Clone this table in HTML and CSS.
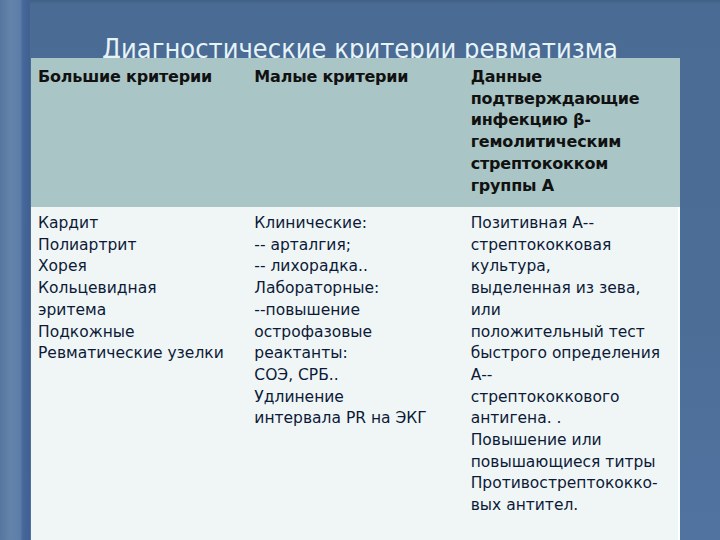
FILE: index.html
```html
<!DOCTYPE html>
<html lang="ru">
<head>
<meta charset="utf-8">
<title>Диагностические критерии ревматизма</title>
<link rel="stylesheet" href="styles.css">
</head>
<body>
<div class="slide">
  <div class="edge"></div>
  <div class="main">
    <h1 class="title">Диагностические критерии ревматизма</h1>
    <div class="table">
      <div class="cell head">Большие критерии</div>
      <div class="cell head">Малые критерии</div>
      <div class="cell head">Данные<br>подтверждающие<br>инфекцию β-<br>гемолитическим<br>стрептококком<br>группы А</div>
      <div class="cell body">Кардит<br>Полиартрит<br>Хорея<br>Кольцевидная<br>эритема<br>Подкожные<br>Ревматические узелки</div>
      <div class="cell body">Клинические:<br>-- арталгия;<br>-- лихорадка..<br>Лабораторные:<br>--повышение<br>острофазовые<br>реактанты:<br>СОЭ, СРБ..<br>Удлинение<br>интервала PR на ЭКГ</div>
      <div class="cell body last">Позитивная А--<br>стрептококковая<br>культура,<br>выделенная из зева,<br>или<br>положительный тест<br>быстрого определения<br>А--<br>стрептококкового<br>антигена. .<br>Повышение или<br>повышающиеся титры<br>Противострептококко-<br>вых антител.</div>
    </div>
  </div>
</div>
</body>
</html>
```

FILE: styles.css
```css
html, body {
  margin: 0;
  padding: 0;
}
.slide {
  width: 720px;
  height: 540px;
  overflow: hidden;
  position: relative;
  background:
    linear-gradient(180deg, #3f5f86 0px, #4a6b93 4px, #4c6d96 60%, #5173a0 100%);
  font-family: "DejaVu Sans", sans-serif;
}
.edge {
  position: absolute;
  left: 0;
  top: 0;
  width: 30px;
  height: 540px;
  background: linear-gradient(90deg, #56769f 0px, #6483ab 10px, #5d7ea8 20px, #46679a 23px, #3f6090 30px);
}
.main {
  position: relative;
  margin-left: 31px;
  width: 649px;
}
.title {
  margin: 0 0 0 -31px;
  height: 58px;
  box-sizing: border-box;
  padding-top: 33px;
  width: 720px;
  text-align: center;
  font-family: "DejaVu Sans Condensed", "DejaVu Sans", sans-serif;
  font-stretch: semi-condensed;
  font-weight: normal;
  font-size: 27px;
  line-height: 32px;
  color: #e6f4f8;
}
.table {
  position: relative;
  z-index: 1;
  display: grid;
  grid-template-columns: 1fr 1fr 1fr;
  grid-template-rows: 149px 333px;
}
.cell {
  padding: 8px 6px 0 7px;
  font-size: 15.5px;
  line-height: 21.7px;
}
.head {
  background: #a9c5c5;
  color: #111;
  font-weight: bold;
  font-size: 16px;
  letter-spacing: -0.2px;
}
.body {
  background: #f0f6f6;
  color: #0c1a38;
  padding-top: 6px;
}
.last {
  border-right: 2px solid #fbffff;
}
```
